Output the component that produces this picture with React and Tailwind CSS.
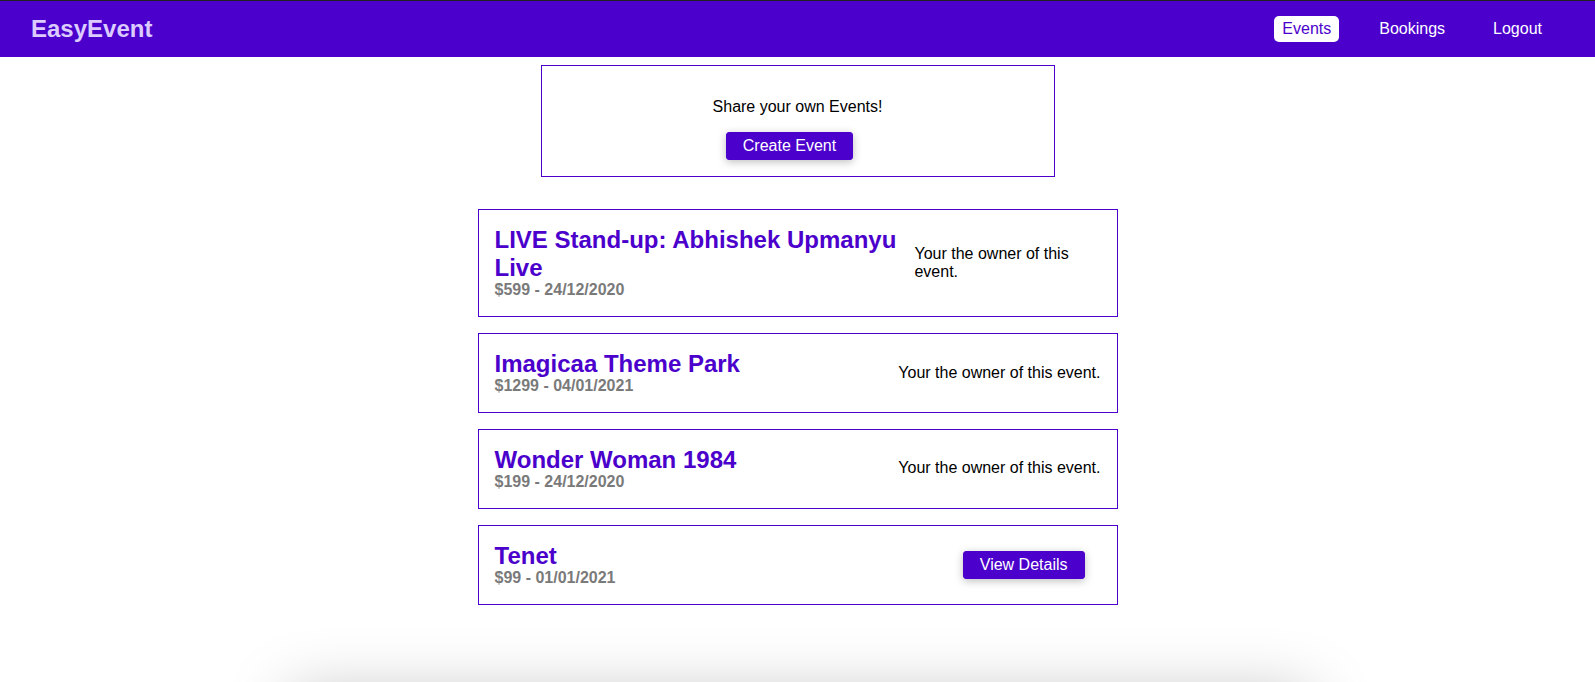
const events = [
  { id: 1, title: 'LIVE Stand-up: Abhishek Upmanyu Live', price: 599, date: '24/12/2020', own: true },
  { id: 2, title: 'Imagicaa Theme Park', price: 1299, date: '04/01/2021', own: true },
  { id: 3, title: 'Wonder Woman 1984', price: 199, date: '24/12/2020', own: true },
  { id: 4, title: 'Tenet', price: 99, date: '01/01/2021', own: false },
];

function Nav() {
  return (
    <header className="border-t border-[#222222] bg-[#4b00cc]">
      <div className="flex h-14 items-center justify-between pl-[31px] pr-[45px]">
        <h1 className="m-0 text-[24px] font-bold leading-none text-[#dccbff]">EasyEvent</h1>
        <ul className="flex items-center gap-8 text-base">
          <li>
            <a className="block rounded-[5px] bg-white px-2 py-1 leading-[18px] text-[#4b00cc]">Events</a>
          </li>
          <li>
            <a className="block px-2 py-1 leading-[18px] text-white">Bookings</a>
          </li>
          <li>
            <button className="block px-2 py-1 leading-[18px] text-white">Logout</button>
          </li>
        </ul>
      </div>
    </header>
  );
}

function Btn({ children }) {
  return (
    <button className="mr-4 rounded-[3px] border border-[#4b00cc] bg-[#4b00cc] px-4 py-1 text-base leading-[18px] text-white shadow-[0_2px_8px_rgba(0,0,0,0.26)]">
      {children}
    </button>
  );
}

function EventItem({ ev }) {
  return (
    <li className="flex items-center justify-between border border-[#4b00cc] p-4">
      <div>
        <h1 className="m-0 text-[24px] font-bold leading-[27.5px] text-[#4b00cc]">{ev.title}</h1>
        <h2 className="m-0 text-base font-bold leading-[18.4px] text-[#7a7a7a]">
          ${ev.price} - {ev.date}
        </h2>
      </div>
      <div>
        {ev.own ? (
          <p className="m-0 text-base leading-[18.4px] text-black">Your the owner of this event.</p>
        ) : (
          <Btn>View Details</Btn>
        )}
      </div>
    </li>
  );
}

export default function App() {
  return (
    <div className="relative h-[682px] overflow-hidden bg-white font-['Liberation_Sans',Arial,sans-serif] text-black">
      <Nav />
      <main>
        <div className="mx-auto mt-2 w-[514px] border border-[#4b00cc] p-4 text-center">
          <p className="my-4 text-base leading-[18.4px]">Share your own Events!</p>
          <Btn>Create Event</Btn>
        </div>
        <ul className="mx-auto mt-8 flex w-[640px] flex-col gap-4">
          {events.map((ev) => (
            <EventItem key={ev.id} ev={ev} />
          ))}
        </ul>
      </main>
      <div className="absolute left-[290px] top-[695px] h-[300px] w-[1020px] bg-white shadow-[0_0_60px_rgba(0,0,0,0.25)]" />
    </div>
  );
}
